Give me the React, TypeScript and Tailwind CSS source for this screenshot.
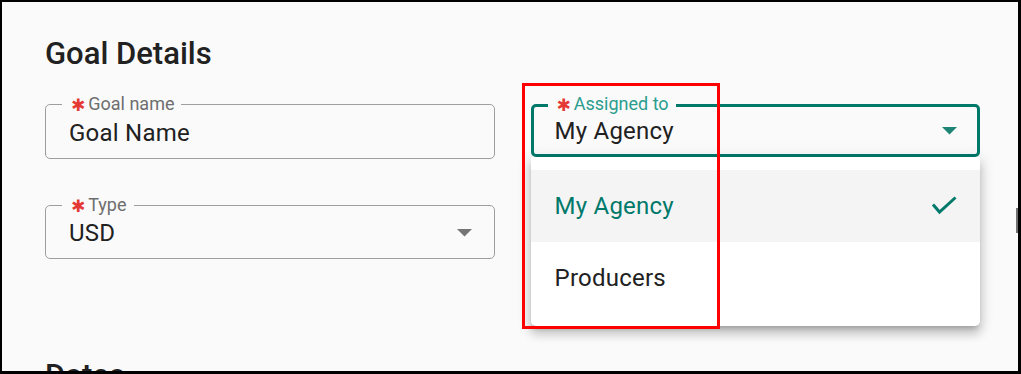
import React from "react";

function Asterisk() {
  return <span className="text-[#e53935] text-[17px] leading-[20px] font-['DejaVu_Sans',sans-serif] mr-[3px] relative top-[1px]">✱</span>;
}

function Arrow({ color }: { color: string }) {
  return (
    <svg width="15" height="8" viewBox="0 0 15 8">
      <polygon points="0,0 15,0 7.5,7.5" fill={color} />
    </svg>
  );
}

function Field({ label, value, select, h }: { label: string; value: string; select?: boolean; h: string }) {
  return (
    <div className={`relative rounded-[5px] border border-[#9e9e9e] ${h}`}>
      <div className="absolute left-[16px] top-[-11px] flex items-center bg-[#fafafa] pl-[9px] pr-[7px] h-[20px]">
        <Asterisk />
        <span className="text-[18px] leading-[20px] text-[#6e6e6e]">{label}</span>
      </div>
      <div className="flex h-full items-center justify-between pl-[23px] pr-[22px] pt-[2px]">
        <span className="text-[24px] leading-[28px] tracking-[0.01em] text-[#212121]">{value}</span>
        {select && <Arrow color="#757575" />}
      </div>
    </div>
  );
}

export default function App() {
  return (
    <div className="relative w-[1021px] h-[374px] overflow-hidden border-t-2 border-l-2 border-r-[3px] border-b-[3px] border-black bg-[#fafafa] font-['Roboto',sans-serif]">
      <div className="pl-[43px] pr-[38px] pt-[34px]">
        <h2 className="text-[31px] leading-[36px] font-medium text-[#212121]">Goal Details</h2>
        <div className="grid grid-cols-2 gap-x-[36px] mt-[32px]">
          <div className="flex flex-col gap-[46px]">
            <Field label="Goal name" value="Goal Name" h="h-[55px]" />
            <Field label="Type" value="USD" select h="h-[54px]" />
          </div>
          <div className="relative">
            <div className="relative z-10 h-[53px] rounded-[5px] border-[3px] border-[#00796b]">
              <div className="absolute left-[14px] top-[-13px] flex items-center bg-[#fafafa] pl-[9px] pr-[7px] h-[20px]">
                <Asterisk />
                <span className="text-[18px] leading-[20px] text-[#2a9d8f]">Assigned to</span>
              </div>
              <div className="flex h-full items-center justify-between pl-[21px] pr-[20px]">
                <span className="text-[24px] leading-[28px] tracking-[0.01em] text-[#212121]">My Agency</span>
                <Arrow color="#1e8576" />
              </div>
            </div>
            <div className="absolute left-0 top-[53px] w-full bg-white rounded-b-[5px] pt-[13px] pb-[12px] shadow-[0px_5px_5px_-3px_rgba(0,0,0,0.2),0px_8px_10px_1px_rgba(0,0,0,0.14),0px_3px_14px_2px_rgba(0,0,0,0.12)] z-20">
              <div className="flex h-[72px] items-center justify-between bg-[#f4f4f4] pl-[24px] pr-[23px]">
                <span className="text-[24px] leading-[28px] tracking-[0.01em] text-[#00796b]">My Agency</span>
                <svg width="26" height="20" viewBox="0 0 26 20">
                  <path d="M2 8.5 L8.5 16 L24.5 1.5" fill="none" stroke="#00796b" strokeWidth="3" />
                </svg>
              </div>
              <div className="flex h-[72px] items-center pl-[24px]">
                <span className="text-[24px] leading-[28px] tracking-[0.01em] text-[#212121]">Producers</span>
              </div>
            </div>
          </div>
        </div>
        <h2 className="mt-[99px] text-[31px] leading-[36px] font-medium text-[#212121]">Dates</h2>
      </div>
      <div className="absolute left-[520px] top-[81px] w-[198px] h-[246px] border-[3px] border-[#ff0000] z-30" />
      <div className="absolute right-0 top-[206px] w-[2px] h-[25px] bg-[#707070]" />
    </div>
  );
}
